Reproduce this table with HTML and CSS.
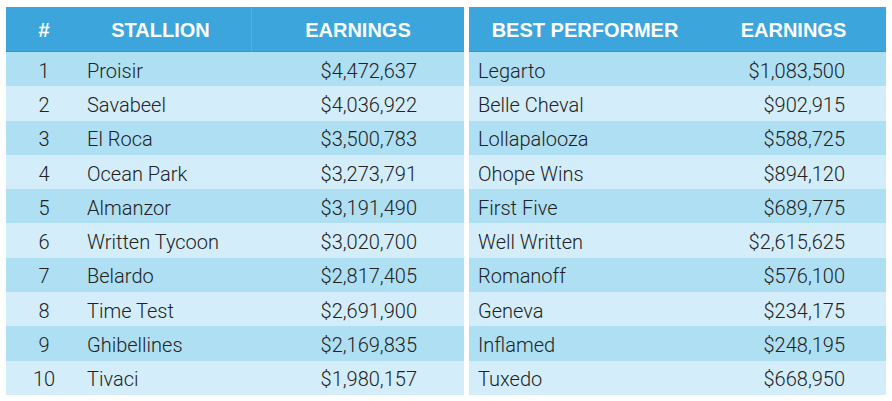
FILE: index.html
```html
<!DOCTYPE html>
<html>
<head>
<meta charset="utf-8">
<link rel="stylesheet" href="styles.css">
</head>
<body>
<div class="page">
  <div class="table left">
    <div class="row head">
      <div class="c num">#</div>
      <div class="c name">STALLION</div>
      <div class="c earn divider">EARNINGS</div>
    </div>
    <div class="row odd"><div class="c num">1</div><div class="c name">Proisir</div><div class="c earn">$4,472,637</div></div>
    <div class="row even"><div class="c num">2</div><div class="c name">Savabeel</div><div class="c earn">$4,036,922</div></div>
    <div class="row odd"><div class="c num">3</div><div class="c name">El Roca</div><div class="c earn">$3,500,783</div></div>
    <div class="row even"><div class="c num">4</div><div class="c name">Ocean Park</div><div class="c earn">$3,273,791</div></div>
    <div class="row odd"><div class="c num">5</div><div class="c name">Almanzor</div><div class="c earn">$3,191,490</div></div>
    <div class="row even"><div class="c num">6</div><div class="c name">Written Tycoon</div><div class="c earn">$3,020,700</div></div>
    <div class="row odd"><div class="c num">7</div><div class="c name">Belardo</div><div class="c earn">$2,817,405</div></div>
    <div class="row even"><div class="c num">8</div><div class="c name">Time Test</div><div class="c earn">$2,691,900</div></div>
    <div class="row odd"><div class="c num">9</div><div class="c name">Ghibellines</div><div class="c earn">$2,169,835</div></div>
    <div class="row even"><div class="c num">10</div><div class="c name">Tivaci</div><div class="c earn">$1,980,157</div></div>
  </div>
  <div class="table right">
    <div class="row head">
      <div class="c name">BEST PERFORMER</div>
      <div class="c earn">EARNINGS</div>
    </div>
    <div class="row odd"><div class="c name">Legarto</div><div class="c earn">$1,083,500</div></div>
    <div class="row even"><div class="c name">Belle Cheval</div><div class="c earn">$902,915</div></div>
    <div class="row odd"><div class="c name">Lollapalooza</div><div class="c earn">$588,725</div></div>
    <div class="row even"><div class="c name">Ohope Wins</div><div class="c earn">$894,120</div></div>
    <div class="row odd"><div class="c name">First Five</div><div class="c earn">$689,775</div></div>
    <div class="row even"><div class="c name">Well Written</div><div class="c earn">$2,615,625</div></div>
    <div class="row odd"><div class="c name">Romanoff</div><div class="c earn">$576,100</div></div>
    <div class="row even"><div class="c name">Geneva</div><div class="c earn">$234,175</div></div>
    <div class="row odd"><div class="c name">Inflamed</div><div class="c earn">$248,195</div></div>
    <div class="row even"><div class="c name">Tuxedo</div><div class="c earn">$668,950</div></div>
  </div>
</div>
</body>
</html>
```
FILE: styles.css
```css
html, body {
  margin: 0;
  padding: 0;
  background: #ffffff;
}
body {
  font-family: Roboto, "Liberation Sans", Arial, sans-serif;
  color: #222222;
}
.page {
  display: flex;
  gap: 5px;
  padding: 7px 0 0 6px;
}
.table {
  display: flex;
  flex-direction: column;
}
.left { width: 458px; }
.right { width: 417px; }
.row {
  display: grid;
  height: 34.3px;
  align-items: center;
  font-size: 20px;
  font-weight: 300;
}
.left .row { grid-template-columns: 67px 178px 213px; }
.right .row { grid-template-columns: 232px 185px; }
.row.head {
  height: 45px;
  background: #3ba5dc;
  color: #ffffff;
  font-family: "Liberation Sans", Arial, sans-serif;
  font-size: 20px;
  font-weight: bold;
  box-shadow: inset 0 -1px 0 #3597cc;
}
.row.odd { background: #afdff2; }
.row.even { background: #d4edfb; }
.c {
  line-height: 1;
  white-space: nowrap;
  display: flex;
  align-items: center;
  height: 100%;
  padding-top: 3px;
  box-sizing: border-box;
}
.left .num {
  justify-content: center;
  padding-left: 9px;
}
.left .name { padding-left: 14px; }
.left .earn {
  justify-content: flex-end;
  padding-right: 47px;
}
.right .name { padding-left: 9px; }
.right .earn {
  justify-content: flex-end;
  padding-right: 41px;
}
.head .c { justify-content: center; padding: 0; }
.left .head .num { padding-left: 9px; }
.left .head .name { padding-right: 3px; }
.head .divider { border-left: 1px solid #4cb0e3; }
```
